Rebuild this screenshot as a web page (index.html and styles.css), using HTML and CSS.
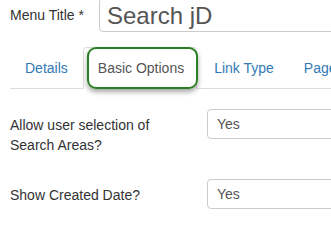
FILE: index.html
```html
<!DOCTYPE html>
<html lang="en">
<head>
  <meta charset="UTF-8">
  <meta name="viewport" content="width=device-width, initial-scale=1.0">
  <title>Menu Item</title>
  <link rel="stylesheet" href="styles.css">
</head>
<body>
  <div class="page">
    <div class="title-row">
      <label class="title-label">Menu Title *</label>
      <div class="title-input">Search jD</div>
    </div>

    <ul class="tabs">
      <li class="tab"><a>Details</a></li>
      <li class="tab active"><a>Basic Options</a><span class="highlight"></span></li>
      <li class="tab"><a>Link Type</a></li>
      <li class="tab"><a>Page Display</a></li>
    </ul>

    <div class="tab-content">
      <div class="row">
        <div class="row-label">Allow user selection of<br>Search Areas?</div>
        <div class="select">Yes</div>
      </div>
      <div class="row">
        <div class="row-label">Show Created Date?</div>
        <div class="select">Yes</div>
      </div>
    </div>
  </div>
</body>
</html>
```

FILE: styles.css
```css
body {
  margin: 0;
  font-family: "Liberation Sans", Arial, sans-serif;
  font-size: 14px;
  color: #333;
  background: #fff;
  overflow: hidden;
}
.page {
  padding-left: 10px;
  width: 600px;
}
.title-row {
  display: flex;
  align-items: center;
  height: 34px;
  margin-top: -2px;
}
.title-label {
  width: 89px;
  flex: none;
}
.title-input {
  flex: none;
  width: 300px;
  height: 34px;
  box-sizing: border-box;
  border: 1px solid #ccc;
  border-radius: 4px;
  padding-left: 7px;
  font-size: 24px;
  line-height: 33px;
  color: #555;
}
.tabs {
  list-style: none;
  margin: 15px 0 0;
  padding: 0;
  display: flex;
  border-bottom: 1px solid #ddd;
}
.tab {
  position: relative;
  margin-right: 2px;
  margin-bottom: -1px;
}
.tab a {
  display: block;
  padding: 10px 12px 10px 14px;
  line-height: 20px;
  border: 1px solid transparent;
  border-radius: 4px 4px 0 0;
  color: #337ab7;
  white-space: nowrap;
}
.tab.active a {
  color: #555;
  background: #fff;
  border-color: #ddd #ddd transparent;
}
.highlight {
  position: absolute;
  left: 4px;
  right: -1px;
  top: 0;
  bottom: 0;
  border: 2px solid #2a7f22;
  border-radius: 9px;
  box-shadow: 0 3px 5px rgba(0, 0, 0, 0.35);
}
.tab-content {
  padding-top: 20px;
}
.row {
  display: flex;
  align-items: flex-start;
  margin-bottom: 24px;
}
.row-label {
  width: 197px;
  flex: none;
  margin-top: 6px;
  line-height: 20px;
}
.select {
  flex: none;
  width: 200px;
  height: 30px;
  box-sizing: border-box;
  border: 1px solid #ccc;
  border-radius: 4px;
  padding-left: 9px;
  line-height: 28px;
  color: #555;
}
```
